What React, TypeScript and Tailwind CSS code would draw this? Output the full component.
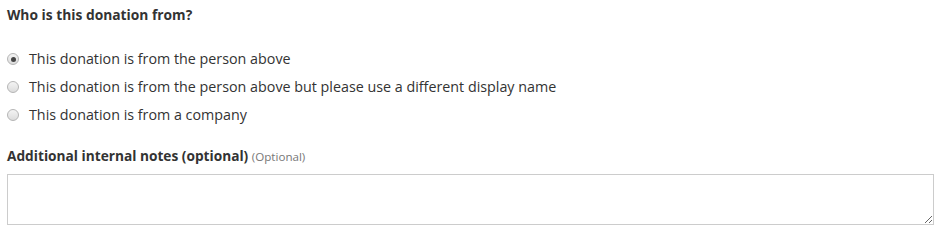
const options = [
  "This donation is from the person above",
  "This donation is from the person above but please use a different display name",
  "This donation is from a company",
];

const Radio = ({ checked }: { checked: boolean }) => (
  <span className="flex h-[12px] w-[12px] items-center justify-center rounded-full border border-[#b5b5b5] bg-gradient-to-b from-[#f4f4f4] to-[#dcdcdc]">
    {checked && <span className="h-[5px] w-[5px] rounded-full bg-[#444]" />}
  </span>
);

export default function App() {
  return (
    <div className="min-h-screen bg-white px-[7px] pt-[5px] text-[#333] font-['Open_Sans',sans-serif]">
      <h3 className="text-[13.8px] font-bold leading-[20px] text-[#333]">Who is this donation from?</h3>

      <div className="mt-[24px] flex flex-col gap-[8px]">
        {options.map((opt, i) => (
          <label key={i} className="flex h-[20px] items-center gap-[10px] text-[14.3px] leading-[20px]">
            <Radio checked={i === 0} />
            <span>{opt}</span>
          </label>
        ))}
      </div>

      <div className="mt-[21px] text-[13.7px] font-bold leading-[20px]">
        Additional internal notes (optional){" "}
        <span className="text-[11.6px] font-normal text-[#777]">(Optional)</span>
      </div>

      <textarea className="mt-[7px] block h-[51px] w-[927px] rounded-none border border-[#ccc] bg-white px-2 py-1 text-[14px] outline-none" />
    </div>
  );
}
